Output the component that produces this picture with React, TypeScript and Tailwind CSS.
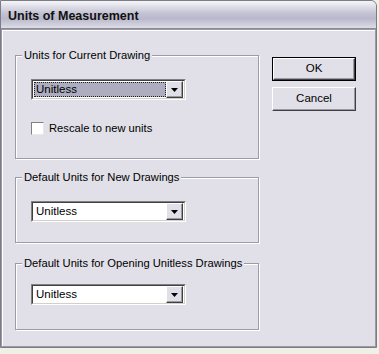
import React from "react";

const FONT = { fontFamily: '"Liberation Sans", Arial, sans-serif' };

function Arrow() {
  return (
    <div className="flex h-[17px] w-[17px] items-center justify-center border border-t-white border-l-white border-b-[#404040] border-r-[#404040] bg-[#e1e0e8] shadow-[inset_-1px_-1px_0_#9a99a6]">
      <svg width="7" height="4" viewBox="0 0 7 4">
        <path d="M0 0 H7 L3.5 4 Z" fill="#000" />
      </svg>
    </div>
  );
}

function Combo({ focused = false }: { focused?: boolean }) {
  return (
    <div className="flex h-[21px] w-[155px] border border-t-[#808080] border-l-[#808080] border-b-white border-r-white">
      <div className="flex flex-1 items-center border border-t-[#404040] border-l-[#404040] border-b-[#d4d0c8] border-r-[#d4d0c8] bg-white p-[1px]">
        <div
          className={
            focused
              ? "flex h-full flex-1 items-center border border-dotted border-[#202020] bg-[#aeadc0] pl-[1px] text-[11.5px] text-black"
              : "flex h-full flex-1 items-center pl-[2px] text-[11.5px] text-black"
          }
        >
          Unitless
        </div>
        <Arrow />
      </div>
    </div>
  );
}

function Group({
  label,
  className,
  children,
}: {
  label: string;
  className: string;
  children: React.ReactNode;
}) {
  return (
    <div
      className={`relative w-[244px] border border-[#9c9ba8] pl-[15px] shadow-[inset_1px_1px_0_#ffffff,1px_1px_0_#ffffff] ${className}`}
    >
      <span className="absolute -top-[8px] left-[6px] whitespace-nowrap bg-[#e1e0e8] px-[2px] text-[11.2px] leading-[14px] text-black">
        {label}
      </span>
      {children}
    </div>
  );
}

export default function App() {
  return (
    <div className="h-[354px] w-[379px] bg-[#f1f0e6]" style={FONT}>
      <div className="flex h-[348px] w-[377px] flex-col rounded-tr-[6px] border border-[#7c7b88]">
        <div className="flex h-[28px] items-center rounded-tr-[6px] border-b border-[#8a8996] bg-[linear-gradient(#f6f6f9,#c4c3d4_45%,#b9b8cc_65%,#dddce6)] pl-[7px] pt-[3px]">
          <span className="text-[12.5px] font-bold text-[#111]">Units of Measurement</span>
        </div>
        <div className="flex flex-1 border border-[#9a99a6] bg-[#e1e0e8] pl-[13px] shadow-[inset_1px_1px_0_#ffffff]">
          <div className="flex flex-col pt-[25px]">
            <Group label="Units for Current Drawing" className="h-[104px] pt-[23px]">
              <Combo focused />
              <div className="mt-[20px] flex items-center gap-[5px]">
                <div className="h-[13px] w-[13px] border border-t-[#808080] border-l-[#808080] border-b-[#e8e8e8] border-r-[#e8e8e8] bg-white" />
                <span className="text-[11.2px] text-black">Rescale to new units</span>
              </div>
            </Group>
            <Group label="Default Units for New Drawings" className="mt-[18px] h-[66px] pt-[23px]">
              <Combo />
            </Group>
            <Group label="Default Units for Opening Unitless Drawings" className="mt-[20px] h-[67px] pt-[20px]">
              <Combo />
            </Group>
          </div>
          <div className="ml-[13px] flex flex-col gap-[6px] pt-[27px]">
            <div className="h-[24px] w-[84px] border border-black">
              <div className="flex h-full items-center justify-center border border-t-white border-l-white border-b-[#404040] border-r-[#404040] bg-[#e1e0e8] text-[11.5px] text-black shadow-[inset_-1px_-1px_0_#9a99a6]">
                OK
              </div>
            </div>
            <div className="flex h-[24px] w-[84px] items-center justify-center border border-t-white border-l-white border-b-[#404040] border-r-[#404040] bg-[#e1e0e8] text-[11.5px] text-black shadow-[inset_-1px_-1px_0_#9a99a6]">
              Cancel
            </div>
          </div>
        </div>
      </div>
    </div>
  );
}
